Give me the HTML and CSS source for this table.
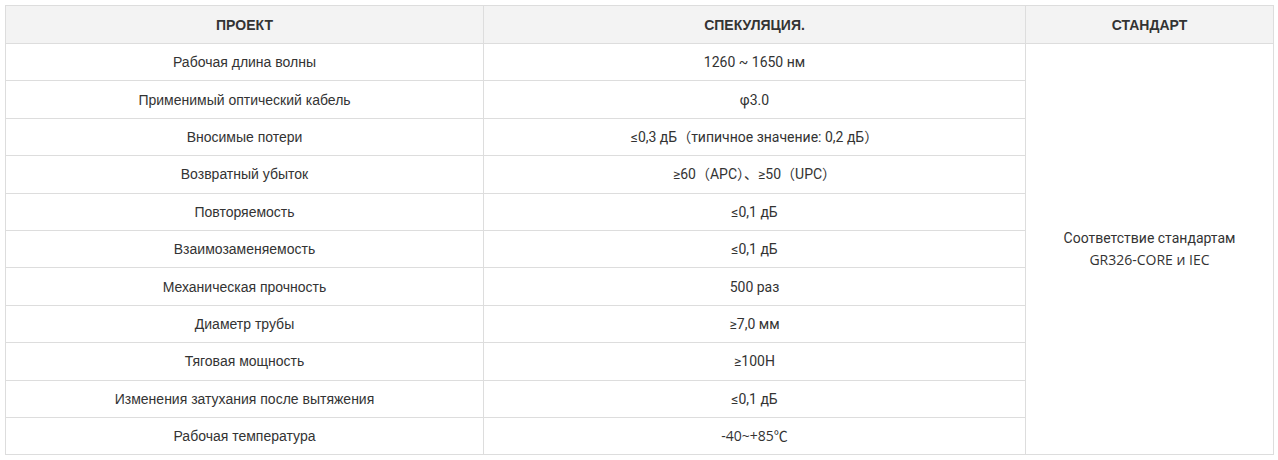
FILE: index.html
```html
<!DOCTYPE html>
<html lang="ru">
<head>
<meta charset="utf-8">
<title>Spec</title>
<link rel="stylesheet" href="styles.css">
</head>
<body>
<table class="spec">
  <colgroup>
    <col class="c1">
    <col class="c2">
    <col class="c3">
  </colgroup>
  <thead>
    <tr><th>ПРОЕКТ</th><th>СПЕКУЛЯЦИЯ.</th><th>СТАНДАРТ</th></tr>
  </thead>
  <tbody>
    <tr><td>Рабочая длина волны</td><td class="v">1260 ~ 1650 нм</td><td class="std" rowspan="11">Соответствие стандартам<br><span class="lat">GR326-CORE и IEC</span></td></tr>
    <tr><td>Применимый оптический кабель</td><td class="v">φ3.0</td></tr>
    <tr><td>Вносимые потери</td><td class="v">≤0,3 дБ（типичное значение: 0,2 дБ）</td></tr>
    <tr><td>Возвратный убыток</td><td class="v">≥60（APC）、≥50（UPC）</td></tr>
    <tr><td>Повторяемость</td><td class="v">≤0,1 дБ</td></tr>
    <tr><td>Взаимозаменяемость</td><td class="v">≤0,1 дБ</td></tr>
    <tr><td>Механическая прочность</td><td class="v">500 раз</td></tr>
    <tr><td>Диаметр трубы</td><td class="v">≥7,0 мм</td></tr>
    <tr><td>Тяговая мощность</td><td class="v">≥100Н</td></tr>
    <tr><td>Изменения затухания после вытяжения</td><td class="v">≤0,1 дБ</td></tr>
    <tr><td>Рабочая температура</td><td class="v"><span class="lat">-40~+85</span>℃</td></tr>
  </tbody>
</table>
</body>
</html>
```
FILE: styles.css
```css
html, body {
  margin: 0;
  background: #fff;
}
body {
  padding: 5px;
  font-family: "Liberation Sans", Arial, sans-serif;
  color: #333;
}
.spec {
  width: 1268px;
  border-collapse: collapse;
  table-layout: fixed;
  font-size: 14px;
}
.c1 { width: 478px; }
.c2 { width: 542px; }
.c3 { width: 248px; }
.spec th,
.spec td {
  border: 1px solid #ddd;
  text-align: center;
  vertical-align: middle;
  padding: 0 8px;
  height: 36.4px;
  line-height: 20px;
}
.spec th {
  background: #f3f3f3;
  font-weight: bold;
  font-size: 14px;
  height: 37px;
}
.spec .v {
  font-family: "Roboto", "Noto Sans CJK SC", sans-serif;
  font-size: 14px;
}
.spec .std {
  font-family: "Roboto", "Noto Sans CJK SC", sans-serif;
  line-height: 22px;
  font-size: 14px;
}
.spec .lat {
  font-family: "Open Sans", "Roboto", sans-serif;
}
```
